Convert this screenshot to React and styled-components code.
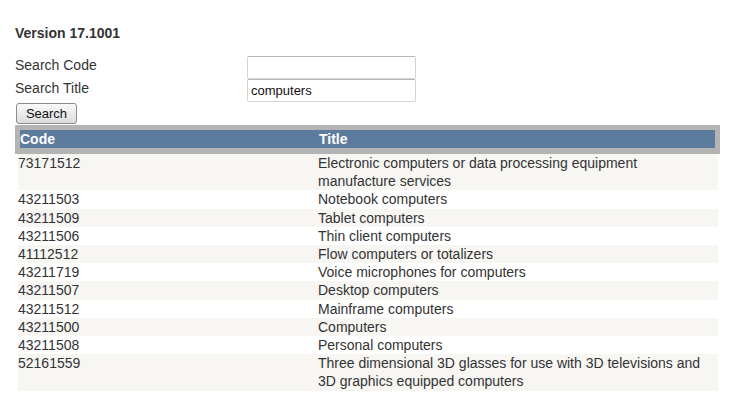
import React from "react";
import styled, { createGlobalStyle } from "styled-components";

const textColor = "#333333";
const headerBlue = "#5d7b9d";
const rowTint = "#f7f6f3";

const GlobalStyle = createGlobalStyle`
    html, body {
        margin: 0;
        padding: 0;
        background: #ffffff;
    }
    body {
        font-family: "Liberation Sans", Arial, sans-serif;
        color: ${textColor};
    }
`;

const Page = styled.div`
    padding: 25px 15px 15px 15px;
    width: 712px;
`;

const Version = styled.div`
    font-size: 14px;
    font-weight: bold;
    line-height: 16px;
    margin-bottom: 15px;
`;

const FormGrid = styled.div`
    display: grid;
    grid-template-columns: 232px 169px;
`;

const Label = styled.div`
    box-sizing: border-box;
    font-size: 14px;
    line-height: 16px;
    height: 23px;
    padding-top: 1px;
`;

const TextBox = styled.input`
    box-sizing: border-box;
    width: 169px;
    height: 23px;
    margin: 0;
    padding: 1px 3px;
    border: 1px solid #d4d4d4;
    border-top-color: #b8b8b8;
    border-radius: 2px;
    font-family: "Liberation Sans", Arial, sans-serif;
    font-size: 13px;
    color: #111;
    outline: none;
`;

const SearchButton = styled.button`
    display: block;
    box-sizing: border-box;
    margin: 1px 0 1px 1px;
    width: 61px;
    height: 21px;
    padding: 0;
    border: 1px solid #8c8c8c;
    border-radius: 3px;
    background: linear-gradient(#fafafa, #dcdcdc);
    font-family: "Liberation Sans", Arial, sans-serif;
    font-size: 13px;
    color: #111;
`;

const HeaderFrame = styled.div`
    width: 695px;
    padding: 5px 5px 6px 5px;
    background: #b4b4b4;
`;

const HeaderRow = styled.div`
    display: grid;
    grid-template-columns: 299px 1fr;
    height: 18px;
    background: ${headerBlue};
    color: #ffffff;
    font-size: 14px;
    font-weight: bold;
    line-height: 18px;
`;

const Body = styled.div`
    width: 700px;
    margin-left: 3px;
`;

const Row = styled.div`
    display: grid;
    grid-template-columns: 300px 400px;
    background: ${props => (props.$alt ? "#ffffff" : rowTint)};
    font-size: 14px;
    line-height: 18.2px;
`;

const Cell = styled.div``;

const results = [
    ["73171512", "Electronic computers or data processing equipment manufacture services"],
    ["43211503", "Notebook computers"],
    ["43211509", "Tablet computers"],
    ["43211506", "Thin client computers"],
    ["41112512", "Flow computers or totalizers"],
    ["43211719", "Voice microphones for computers"],
    ["43211507", "Desktop computers"],
    ["43211512", "Mainframe computers"],
    ["43211500", "Computers"],
    ["43211508", "Personal computers"],
    ["52161559", "Three dimensional 3D glasses for use with 3D televisions and 3D graphics equipped computers"],
];

export default function App() {
    return (
        <Page>
            <GlobalStyle />
            <Version>Version 17.1001</Version>
            <FormGrid>
                <Label>Search Code</Label>
                <TextBox type="text" defaultValue="" />
                <Label>Search Title</Label>
                <TextBox type="text" defaultValue="computers" />
            </FormGrid>
            <SearchButton type="button">Search</SearchButton>
            <HeaderFrame>
                <HeaderRow>
                    <Cell>Code</Cell>
                    <Cell>Title</Cell>
                </HeaderRow>
            </HeaderFrame>
            <Body>
                {results.map(([code, title], i) => (
                    <Row key={code} $alt={i % 2 === 1}>
                        <Cell>{code}</Cell>
                        <Cell>{title}</Cell>
                    </Row>
                ))}
            </Body>
        </Page>
    );
}
